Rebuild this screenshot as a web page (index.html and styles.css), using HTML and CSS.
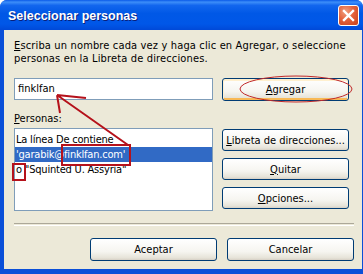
FILE: index.html
```html
<!DOCTYPE html>
<html>
<head>
<meta charset="UTF-8">
<title>Seleccionar personas</title>
<link rel="stylesheet" href="styles.css">
</head>
<body>
<div class="window">
  <div class="titlebar">
    <span class="title">Seleccionar personas</span>
    <span class="close">
      <svg width="13" height="13" viewBox="0 0 13 13"><path d="M2 2 L11 11 M11 2 L2 11" stroke="#fff" stroke-width="2.4" stroke-linecap="square"/></svg>
    </span>
  </div>
  <div class="frame">
    <div class="client">
      <p class="intro"><u>E</u>scriba un nombre cada vez y haga clic en Agregar, o seleccione personas en la Libreta de direcciones.</p>
      <div class="row">
        <div class="field">finklfan</div>
        <button class="btn default"><u>A</u>gregar</button>
      </div>
      <div class="label"><u>P</u>ersonas:</div>
      <div class="row lists">
        <ul class="list">
          <li>La línea De contiene</li>
          <li class="sel">'garabik@finklfan.com'</li>
          <li>o "Squinted U. Assyria"</li>
        </ul>
        <div class="side">
          <button class="btn"><u>L</u>ibreta de direcciones...</button>
          <button class="btn"><u>Q</u>uitar</button>
          <button class="btn"><u>O</u>pciones...</button>
        </div>
      </div>
      <div class="sep"></div>
      <div class="footer">
        <button class="btn">Aceptar</button>
        <button class="btn">Cancelar</button>
      </div>
    </div>
  </div>
  <!-- marcas rojas encima del dialogo -->
  <svg class="marks" width="363" height="274" viewBox="0 0 363 274">
    <ellipse cx="296" cy="89" rx="56" ry="13" fill="none" stroke="#c0282a" stroke-width="1"/>
    <rect x="62" y="145" width="68" height="20" fill="none" stroke="#b5121b" stroke-width="2"/>
    <rect x="13" y="164" width="12" height="16" fill="none" stroke="#b5121b" stroke-width="2"/>
    <path d="M128 145 L57 95 M57 95 L86 98 M57 95 L60 113" fill="none" stroke="#b5121b" stroke-width="2"/>
  </svg>
</div>
</body>
</html>
```

FILE: styles.css
```css
html, body {
  margin: 0;
  padding: 0;
  overflow: hidden;
}
body {
  font-family: "DejaVu Sans Condensed", "Liberation Sans", sans-serif;
  font-size: 11px;
  color: #000;
}
.window {
  position: relative;
  width: 363px;
  height: 274px;
  display: flex;
  flex-direction: column;
  background: #0a4fd8;
  border-radius: 7px 7px 0 0;
  overflow: hidden;
}
.titlebar {
  height: 30px;
  display: flex;
  align-items: center;
  justify-content: space-between;
  padding: 0 4px 0 8px;
  box-sizing: border-box;
  background: linear-gradient(to bottom, #0a5ae8 0%, #3d8ef9 7%, #1266ee 18%, #0058e6 45%, #0057e8 80%, #0049d8 100%);
}
.title {
  font-family: "Liberation Sans", sans-serif;
  font-weight: bold;
  font-size: 12.5px;
  color: #fff;
  text-shadow: 1px 1px 0 #0a1f7a;
  padding-top: 1px;
}
.close {
  width: 21px;
  height: 21px;
  box-sizing: border-box;
  border: 1px solid #fff;
  border-radius: 3px;
  background: radial-gradient(circle at 35% 30%, #f0a080 0%, #e4623c 45%, #c8401a 100%);
  display: flex;
  align-items: center;
  justify-content: center;
}
.frame {
  flex: 1;
  padding: 0 6px 5px 4px;
  display: flex;
}
.client {
  flex: 1;
  background: #ece9d8;
  padding: 9px 8px 0 10px;
}
.intro {
  margin: 0;
  line-height: 13px;
  width: 340px;
  letter-spacing: 0.15px;
}
.row {
  display: flex;
  gap: 9px;
  margin-top: 13px;
  align-items: flex-start;
}
.field {
  width: 199px;
  height: 22px;
  box-sizing: border-box;
  border: 1px solid #7f9db9;
  background: #fff;
  padding: 3px 0 0 3px;
}
.btn {
  width: 127px;
  height: 23px;
  font-family: inherit;
  font-size: 11px;
  color: #000;
  border: 1px solid #003c74;
  border-radius: 3px;
  background: linear-gradient(to bottom, #ffffff 0%, #f6f5f0 60%, #e6e3d8 90%, #d6d0c5 100%);
  padding: 0;
}
.btn.default {
  box-shadow: inset 0 1px 0 1px #fff0cf, inset 0 -2px 0 0 #f8b956;
}
.label {
  margin-top: 11px;
  line-height: 13px;
}
.lists {
  margin-top: 3px;
}
.list {
  list-style: none;
  margin: 0;
  width: 199px;
  height: 83px;
  box-sizing: border-box;
  border: 1px solid #7f9db9;
  background: #fff;
  padding: 3px 0 0 0;
  letter-spacing: -0.2px;
}
.list li {
  height: 15px;
  line-height: 15px;
  padding-left: 1px;
}
.list li.sel {
  background: #316ac5;
  color: #fff;
}
.side {
  display: flex;
  flex-direction: column;
  gap: 7px;
  margin-top: 1px;
}
.side .btn {
  height: 22px;
}
.sep {
  margin-top: 12px;
  height: 1px;
  border-top: 1px solid #aca899;
  border-bottom: 1px solid #fff;
}
.footer {
  display: flex;
  justify-content: flex-end;
  gap: 10px;
  margin-top: 12px;
}
.marks {
  position: absolute;
  left: 0;
  top: 0;
  pointer-events: none;
}
```
